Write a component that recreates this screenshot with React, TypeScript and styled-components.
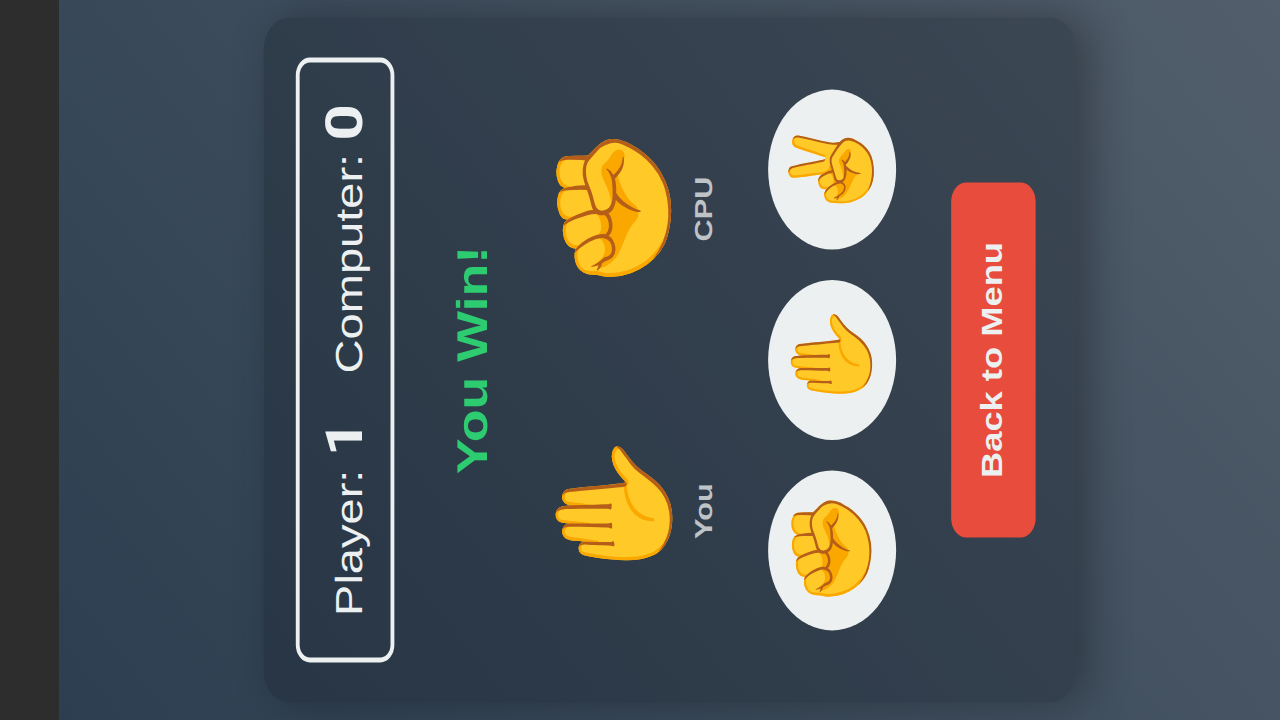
import React from "react";
import styled, { createGlobalStyle } from "styled-components";

const GlobalStyle = createGlobalStyle`
  html, body {
    margin: 0;
    padding: 0;
    background: #2d2d2d;
    overflow: hidden;
    font-family: "Liberation Sans", Arial, sans-serif;
    text-rendering: geometricPrecision;
  }
`;

const Viewport = styled.div`
  width: 1280px;
  height: 720px;
  overflow: hidden;
`;

// the game is a 450px wide phone layout, turned a quarter and stretched to fit
const Stage = styled.div`
  width: 450px;
  height: 954px;
  transform-origin: 0 0;
  transform: translate(59px, 720px) rotate(-90deg) scale(1.6, 1.28);
  background: linear-gradient(135deg, #2c3e50, #525e6b);
  display: flex;
  align-items: center;
  justify-content: center;
`;

const Card = styled.div`
  width: 427.5px;
  height: 634.4px;
  box-sizing: border-box;
  padding: 25px;
  border-radius: 20px;
  background: rgba(20, 28, 38, 0.3);
  box-shadow: 0 10px 30px rgba(0, 0, 0, 0.3);
  display: flex;
  flex-direction: column;
  align-items: center;
`;

const ScoreBoard = styled.div`
  width: 100%;
  height: 77.2px;
  flex: none;
  box-sizing: border-box;
  border: 3px solid #ecf0f1;
  border-radius: 11px;
  display: flex;
  justify-content: center;
  align-items: center;
  gap: 29px;
  color: #ecf0f1;
  font-size: 29.4px;
`;

const ScoreNumber = styled.strong`
  font-family: Roboto, sans-serif;
  font-size: 40px;
  font-weight: bold;
`;

const Result = styled.div`
  margin-top: 43px;
  color: #2ecc71;
  font-size: 33.6px;
  font-weight: bold;
  line-height: 37px;
`;

const Duel = styled.div`
  margin-top: 42px;
  width: 100%;
  display: flex;
  justify-content: space-around;
`;

const Side = styled.div`
  display: flex;
  flex-direction: column;
  align-items: center;
`;

const BigHand = styled.div`
  font-family: "Noto Color Emoji", sans-serif;
  font-size: 87.5px;
  line-height: 100px;
`;

const SideLabel = styled.div`
  margin-top: 10.5px;
  color: #bdc3c7;
  font-size: 19.2px;
  font-weight: bold;
  line-height: 22px;
`;

const Choices = styled.div`
  margin-top: 37.5px;
  display: flex;
  gap: 18.75px;
`;

const Choice = styled.button`
  width: 100px;
  height: 100px;
  padding: 0 0 1px;
  border: none;
  border-radius: 50%;
  background: #ecf0f1;
  font-family: "Noto Color Emoji", sans-serif;
  font-size: 61px;
  display: flex;
  align-items: center;
  justify-content: center;
`;

const MenuButton = styled.button`
  margin-top: 43.4px;
  width: 222.5px;
  height: 65.8px;
  flex: none;
  padding: 0 0 1px;
  border: none;
  border-radius: 12px;
  background: #e74c3c;
  color: #ecf0f1;
  font-family: "Liberation Sans", Arial, sans-serif;
  font-size: 22.7px;
  font-weight: bold;
`;

export default function App() {
  return (
    <Viewport>
      <GlobalStyle />
      <Stage>
        <Card>
          <ScoreBoard>
            <span>
              Player: <ScoreNumber>1</ScoreNumber>
            </span>
            <span>
              Computer: <ScoreNumber>0</ScoreNumber>
            </span>
          </ScoreBoard>
          <Result>You Win!</Result>
          <Duel>
            <Side>
              <BigHand>✋</BigHand>
              <SideLabel>You</SideLabel>
            </Side>
            <Side>
              <BigHand>✊</BigHand>
              <SideLabel>CPU</SideLabel>
            </Side>
          </Duel>
          <Choices>
            <Choice>✊</Choice>
            <Choice>✋</Choice>
            <Choice>✌️</Choice>
          </Choices>
          <MenuButton>Back to Menu</MenuButton>
        </Card>
      </Stage>
    </Viewport>
  );
}
